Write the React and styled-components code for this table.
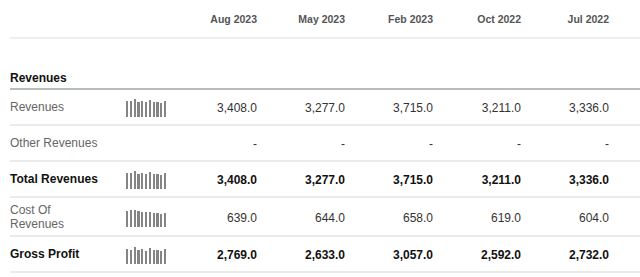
import styled, { createGlobalStyle } from 'styled-components'

const GlobalStyle = createGlobalStyle`
    body {
        margin: 0;
        background: #fff;
        font-family: "Liberation Sans", Arial, sans-serif;
    }
`

const periods = ['Aug 2023', 'May 2023', 'Feb 2023', 'Oct 2022', 'Jul 2022']

const rows = [
    {
        label: 'Revenues',
        spark: [16, 16, 18, 15, 16, 15, 17, 15, 15, 14, 16],
        values: ['3,408.0', '3,277.0', '3,715.0', '3,211.0', '3,336.0'],
    },
    {
        label: 'Other Revenues',
        values: ['-', '-', '-', '-', '-'],
    },
    {
        label: 'Total Revenues',
        bold: true,
        spark: [16, 16, 18, 15, 16, 15, 17, 15, 15, 14, 16],
        values: ['3,408.0', '3,277.0', '3,715.0', '3,211.0', '3,336.0'],
    },
    {
        label: 'Cost Of Revenues',
        spark: [16, 17, 17, 16, 15, 15, 15, 14, 14, 13, 14],
        values: ['639.0', '644.0', '658.0', '619.0', '604.0'],
    },
    {
        label: 'Gross Profit',
        bold: true,
        spark: [15, 14, 17, 14, 15, 13, 16, 14, 14, 13, 15],
        values: ['2,769.0', '2,633.0', '3,057.0', '2,592.0', '2,732.0'],
    },
]

const Sparkline = ({ bars }) => (
    <Spark>
        {bars.map((h, i) => (
            <Bar key={i} style={{ height: h }} />
        ))}
    </Spark>
)

export default function App() {
    return (
        <>
            <GlobalStyle />
            <Table>
                <HeadRow>
                    <span />
                    <span />
                    {periods.map((p) => (
                        <HeadCell key={p}>{p}</HeadCell>
                    ))}
                </HeadRow>
                <SectionRow>
                    <SectionTitle>Revenues</SectionTitle>
                </SectionRow>
                {rows.map((r) => (
                    <Row key={r.label}>
                        <Label $bold={r.bold}>{r.label}</Label>
                        <div>{r.spark && <Sparkline bars={r.spark} />}</div>
                        {r.values.map((v, i) => (
                            <Value key={i} $bold={r.bold}>
                                {v}
                            </Value>
                        ))}
                    </Row>
                ))}
            </Table>
        </>
    )
}

const Table = styled.div`
    margin-left: 10px;
    width: 630px;
`

const Grid = styled.div`
    display: grid;
    grid-template-columns: 110px 49px repeat(5, 88px);
    align-items: center;
`

const HeadRow = styled(Grid)`
    height: 37px;
    border-bottom: 2px solid #eeeeee;
`

const HeadCell = styled.div`
    text-align: right;
    font-size: 10.5px;
    font-weight: bold;
    color: #555;
`

const SectionRow = styled.div`
    height: 51px;
    display: flex;
    align-items: flex-end;
    padding-bottom: 2px;
    box-sizing: border-box;
    border-bottom: 2px solid #b7bdba;
`

const SectionTitle = styled.div`
    font-size: 12px;
    font-weight: bold;
    color: #111;
    line-height: 15px;
`

const Row = styled(Grid)`
    min-height: 24px;
    padding: 6px 0 4px;
    border-bottom: 2px solid #ebebeb;
`

const Label = styled.div`
    font-size: 12px;
    line-height: 13.5px;
    padding-right: 12px;
    color: ${({ $bold }) => ($bold ? '#111' : '#666')};
    font-weight: ${({ $bold }) => ($bold ? 'bold' : 'normal')};
`

const Value = styled.div`
    text-align: right;
    font-size: 12px;
    color: ${({ $bold }) => ($bold ? '#111' : '#333')};
    font-weight: ${({ $bold }) => ($bold ? 'bold' : 'normal')};
`

const Spark = styled.div`
    display: flex;
    align-items: flex-end;
    gap: 1.5px;
    height: 18px;
    padding-left: 6px;
`

const Bar = styled.div`
    width: 2.3px;
    background: #858585;
`
